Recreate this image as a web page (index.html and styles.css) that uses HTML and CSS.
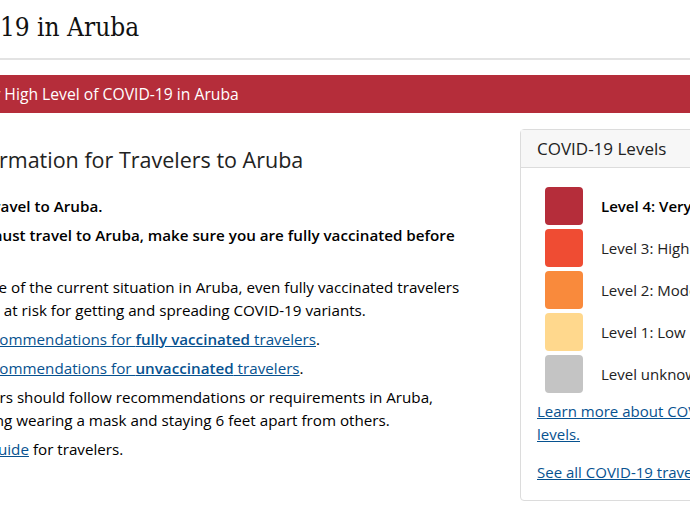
FILE: index.html
```html
<!DOCTYPE html>
<html lang="en">
<head>
<meta charset="utf-8">
<title>COVID-19 in Aruba</title>
<link rel="stylesheet" href="styles.css">
</head>
<body>
<div class="page">
  <header class="title-bar">
    <h1 class="page-title">COVID-19 in Aruba</h1>
  </header>
  <div class="alert-banner">Level 4: Very High Level of COVID-19 in Aruba</div>
  <div class="content">
    <main class="main-col">
      <h2 class="section-title">Key Information for Travelers to Aruba</h2>
      <ul class="key-list">
        <li class="strong">Avoid travel to Aruba.</li>
        <li class="strong">If you must travel to Aruba, make sure you are fully vaccinated before travel.</li>
        <li>Because of the current situation in Aruba, even fully vaccinated travelers may be at risk for getting and spreading COVID-19 variants.</li>
        <li><a href="#">See recommendations for <b>fully vaccinated</b> travelers</a>.</li>
        <li><a href="#">See recommendations for <b>unvaccinated</b> travelers</a>.</li>
        <li>Travelers should follow recommendations or requirements in Aruba, including wearing a mask and staying 6 feet apart from others.</li>
        <li>See a <a href="#">guide</a> for travelers.</li>
      </ul>
    </main>
    <aside class="levels-card">
      <div class="card-header">COVID-19 Levels</div>
      <div class="card-body">
        <ul class="level-list">
          <li class="level current"><span class="swatch lv4"></span>Level 4: Very High</li>
          <li class="level"><span class="swatch lv3"></span>Level 3: High</li>
          <li class="level"><span class="swatch lv2"></span>Level 2: Moderate</li>
          <li class="level"><span class="swatch lv1"></span>Level 1: Low</li>
          <li class="level"><span class="swatch lv0"></span>Level unknown</li>
        </ul>
        <p class="card-link"><a href="#">Learn more about COVID-19 travel notice levels.</a></p>
        <p class="card-link"><a href="#">See all COVID-19 travel notices</a></p>
      </div>
    </aside>
  </div>
</div>
</body>
</html>
```

FILE: styles.css
```css
html, body {
  margin: 0;
  padding: 0;
  background: #fff;
  overflow: hidden;
}
body {
  font-family: "Open Sans", "Noto Sans", sans-serif;
  color: #000;
  width: 690px;
  height: 512px;
}
.page {
  margin-left: -100px;
  width: 1100px;
}
.title-bar {
  box-sizing: border-box;
  height: 60px;
  border-bottom: 2px solid #e3e3e3;
}
.page-title {
  margin: 0;
  padding: 8px 0 0 10px;
  font-family: "DejaVu Serif Condensed", "DejaVu Serif", serif;
  font-weight: normal;
  font-size: 26px;
  line-height: 38px;
  color: #111;
}
.alert-banner {
  margin-top: 15px;
  height: 38px;
  line-height: 38px;
  background: #b52d3a;
  color: #fff;
  font-size: 15.7px;
  padding-left: 9px;
}
.content {
  display: flex;
  align-items: flex-start;
  gap: 40px;
  padding-top: 16px;
}
.main-col {
  width: 580px;
  flex-shrink: 0;
}
.section-title {
  margin: 16px 0 0 18px;
  font-size: 21.5px;
  font-weight: normal;
  line-height: 30px;
  color: #222;
}
.key-list {
  list-style: none;
  margin: 20px 0 0;
  padding: 0 0 0 48px;
  font-size: 15.2px;
  line-height: 23px;
}
.key-list li {
  margin-bottom: 6px;
}
.key-list .strong {
  font-weight: 600;
  text-indent: -5px;
}
.key-list b {
  font-weight: 600;
}
a {
  color: #075290;
  text-decoration: underline;
}
.levels-card {
  width: 334px;
  box-sizing: border-box;
  border: 1px solid #dcdcdc;
  border-radius: 4px;
  flex-shrink: 0;
}
.card-header {
  height: 37px;
  line-height: 37px;
  padding-left: 16px;
  background: #f7f7f7;
  border-bottom: 1px solid #dcdcdc;
  font-size: 17px;
  color: #222;
}
.card-body {
  padding: 19px 16px 16px;
}
.level-list {
  list-style: none;
  margin: 0;
  padding: 0 0 0 8px;
}
.level {
  display: flex;
  align-items: center;
  gap: 18px;
  height: 38px;
  margin-bottom: 4px;
  font-size: 15px;
  color: #222;
}
.level.current {
  font-weight: 600;
  color: #000;
}
.swatch {
  width: 38px;
  height: 38px;
  border-radius: 4px;
  flex-shrink: 0;
}
.lv4 { background: #b52d3a; }
.lv3 { background: #ef4c33; }
.lv2 { background: #f98a3c; }
.lv1 { background: #ffd88d; }
.lv0 { background: #c4c4c4; }
.card-link {
  margin: 0;
  font-size: 15px;
  line-height: 23px;
  width: 300px;
}
.level-list + .card-link {
  margin-top: 7px;
}
.card-link + .card-link {
  margin-top: 15px;
}
```
